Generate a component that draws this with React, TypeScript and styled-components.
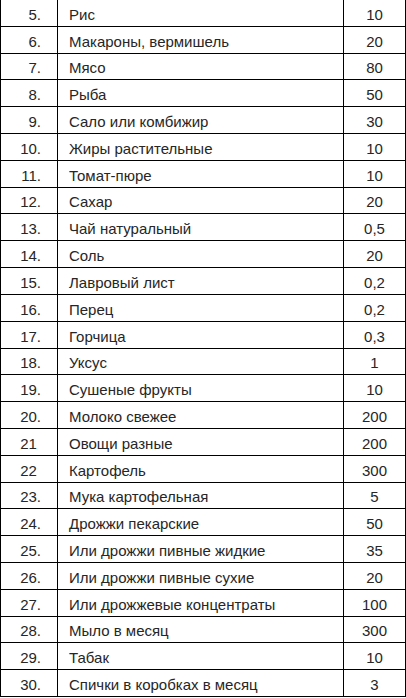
import React from "react";
import styled, { createGlobalStyle } from "styled-components";

const Global = createGlobalStyle`
  html, body { margin: 0; padding: 0; background: #ffffff; }
  body { font-family: "Liberation Sans", Arial, sans-serif; }
`;

const rows: [string, string, string][] = [
  ["5.", "Рис", "10"],
  ["6.", "Макароны, вермишель", "20"],
  ["7.", "Мясо", "80"],
  ["8.", "Рыба", "50"],
  ["9.", "Сало или комбижир", "30"],
  ["10.", "Жиры растительные", "10"],
  ["11.", "Томат-пюре", "10"],
  ["12.", "Сахар", "20"],
  ["13.", "Чай натуральный", "0,5"],
  ["14.", "Соль", "20"],
  ["15.", "Лавровый лист", "0,2"],
  ["16.", "Перец", "0,2"],
  ["17.", "Горчица", "0,3"],
  ["18.", "Уксус", "1"],
  ["19.", "Сушеные фрукты", "10"],
  ["20.", "Молоко свежее", "200"],
  ["21\u00a0", "Овощи разные", "200"],
  ["22\u00a0", "Картофель", "300"],
  ["23.", "Мука картофельная", "5"],
  ["24.", "Дрожжи пекарские", "50"],
  ["25.", "Или дрожжи пивные жидкие", "35"],
  ["26.", "Или дрожжи пивные сухие", "20"],
  ["27.", "Или дрожжевые концентраты", "100"],
  ["28.", "Мыло в месяц", "300"],
  ["29.", "Табак", "10"],
  ["30.", "Спички в коробках в месяц", "3"],
];

const Table = styled.div`
  width: 406px;
  box-sizing: border-box;
  border-left: 1px solid #000;
  border-right: 1px solid #000;
  border-bottom: 1px solid #000;
  display: flex;
  flex-direction: column;
  color: #262626;
  font-size: 15px;
`;

const Row = styled.div<{ $h: number; $first: boolean }>`
  display: grid;
  grid-template-columns: 56px 1px 285px 1px 61px;
  height: ${(p) => p.$h}px;
  box-sizing: border-box;
  border-top: ${(p) => (p.$first ? "none" : "1px solid #000")};
`;

const Sep = styled.div`
  background: #000;
`;

const NumCell = styled.div`
  display: flex;
  align-items: center;
  justify-content: flex-end;
  padding-right: 16px;
  padding-top: 2px;
  white-space: pre;
`;

const NameCell = styled.div`
  display: flex;
  align-items: center;
  padding-left: 11px;
  padding-top: 2px;
  white-space: nowrap;
`;

const ValCell = styled.div`
  display: flex;
  align-items: center;
  justify-content: center;
  padding-top: 2px;
`;

export default function App() {
  const pitch = 697 / 26;
  const heights = rows.map((_, i) => {
    const top = Math.round(-1 + pitch * i);
    const bottom = Math.round(-1 + pitch * (i + 1));
    return i === 0 ? bottom : bottom - top;
  });
  return (
    <>
      <Global />
      <Table>
        {rows.map((r, i) => (
          <Row key={i} $h={heights[i]} $first={i === 0}>
            <NumCell>{r[0]}</NumCell>
            <Sep />
            <NameCell>{r[1]}</NameCell>
            <Sep />
            <ValCell>{r[2]}</ValCell>
          </Row>
        ))}
      </Table>
    </>
  );
}
